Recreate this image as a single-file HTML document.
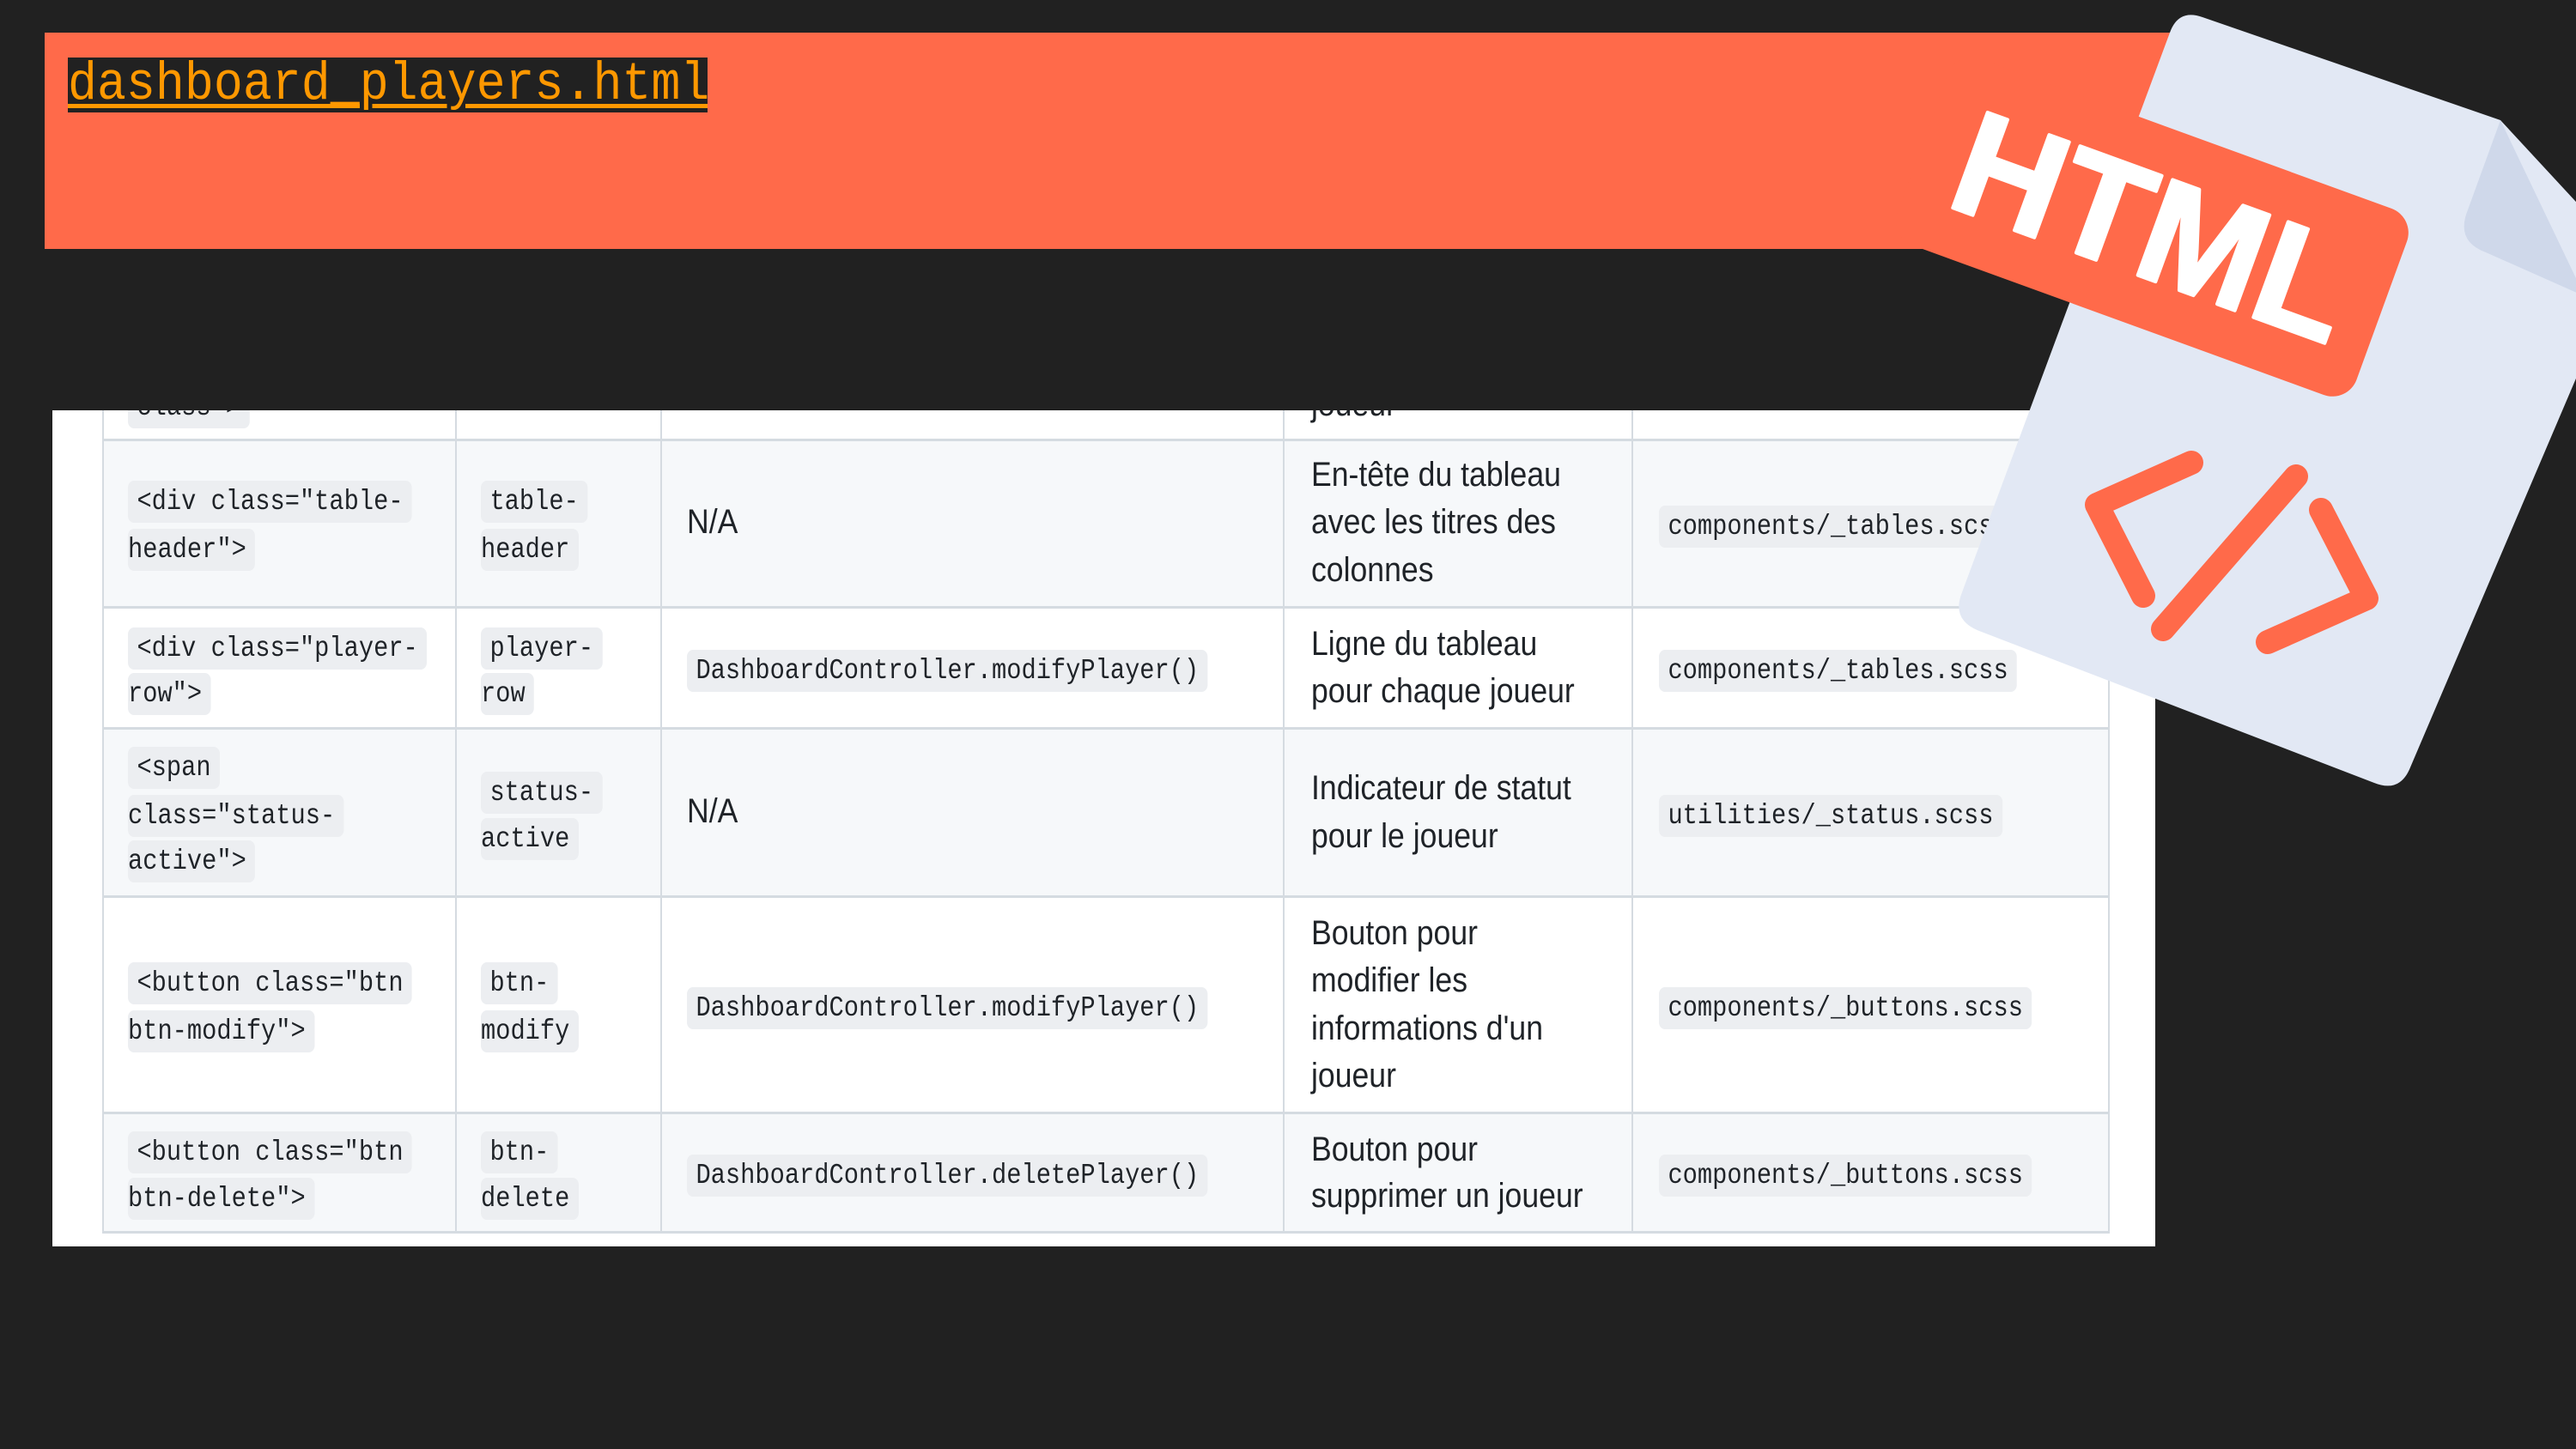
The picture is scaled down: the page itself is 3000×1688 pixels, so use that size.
<!DOCTYPE html>
<html><head><meta charset="utf-8"><style>
*{margin:0;padding:0;box-sizing:border-box}
body{width:3000px;height:1688px;background:#212121;position:relative;overflow:hidden;font-family:"Liberation Sans",sans-serif}
.banner{position:absolute;left:52px;top:38px;width:2520px;height:252px;background:#ff6a4a}
.title{position:absolute;left:79px;top:67px;height:64px;width:745px;background:#212121;overflow:hidden}
.title span{display:block;color:#ff9800;font-family:"Liberation Mono",monospace;font-size:62px;line-height:64px;text-decoration:underline;text-decoration-thickness:5px;text-underline-offset:6px;white-space:nowrap;transform:scaleX(0.913);transform-origin:left center}
.panel{position:absolute;left:61px;top:478px;width:2449px;height:974px;background:#fff;overflow:hidden}
.row{position:absolute;left:58px;width:2336px;border-top:3px solid #d5dbe1}
.vl{position:absolute;top:0;width:2px;height:959px;background:#d5dbe1}
.t{position:absolute;height:54px;line-height:54px;white-space:nowrap;transform-origin:left center;color:#1f2328}
.c{font-family:"Liberation Mono",monospace;font-size:33px;transform:scaleX(0.87)}
.c span{background:#eceef1;border-radius:8px;padding:6px 12px}
.s{font-size:40px;transform:scaleX(0.89)}
</style></head><body>
<div class="banner"></div>
<div class="title"><span>dashboard_players.html</span></div>

<div class="panel">
<div style="position:absolute;left:58px;top:0;width:2336px;height:33px;background:#fff"></div>
<div class="row" style="top:33px;height:195px;background:#f6f8fa"></div>
<div class="row" style="top:228px;height:141px;background:#fff"></div>
<div class="row" style="top:369px;height:196px;background:#f6f8fa"></div>
<div class="row" style="top:565px;height:252px;background:#fff"></div>
<div class="row" style="top:817px;height:142px;background:#f6f8fa;border-bottom:3px solid #d5dbe1"></div>
<div class="vl" style="left:58px"></div>
<div class="vl" style="left:469px"></div>
<div class="vl" style="left:708px"></div>
<div class="vl" style="left:1433px"></div>
<div class="vl" style="left:1839px"></div>
<div class="vl" style="left:2394px"></div>

<div class="t c" style="left:88px;top:-30px"><span>class"&gt;</span></div>
<div class="t s" style="left:1466px;top:-34px">joueur</div>

<div class="t c" style="left:88px;top:80px"><span>&lt;div class="table-</span></div>
<div class="t c" style="left:88px;top:136px"><span style="padding-left:0">header"&gt;</span></div>
<div class="t c" style="left:499px;top:80px"><span>table-</span></div>
<div class="t c" style="left:499px;top:136px"><span style="padding-left:0">header</span></div>
<div class="t s" style="left:739px;top:103px">N/A</div>
<div class="t s" style="left:1466px;top:48px">En-tête du tableau</div>
<div class="t s" style="left:1466px;top:103px">avec les titres des</div>
<div class="t s" style="left:1466px;top:159px">colonnes</div>
<div class="t c" style="left:1871px;top:109px"><span>components/_tables.scss</span></div>

<div class="t c" style="left:88px;top:251px"><span>&lt;div class="player-</span></div>
<div class="t c" style="left:88px;top:304px"><span style="padding-left:0">row"&gt;</span></div>
<div class="t c" style="left:499px;top:251px"><span>player-</span></div>
<div class="t c" style="left:499px;top:304px"><span style="padding-left:0">row</span></div>
<div class="t c" style="left:739px;top:277px"><span>DashboardController.modifyPlayer()</span></div>
<div class="t s" style="left:1466px;top:245px">Ligne du tableau</div>
<div class="t s" style="left:1466px;top:300px">pour chaque joueur</div>
<div class="t c" style="left:1871px;top:277px"><span>components/_tables.scss</span></div>

<div class="t c" style="left:88px;top:390px"><span>&lt;span</span></div>
<div class="t c" style="left:88px;top:446px"><span style="padding-left:0">class="status-</span></div>
<div class="t c" style="left:88px;top:499px"><span style="padding-left:0">active"&gt;</span></div>
<div class="t c" style="left:499px;top:419px"><span>status-</span></div>
<div class="t c" style="left:499px;top:473px"><span style="padding-left:0">active</span></div>
<div class="t s" style="left:739px;top:440px">N/A</div>
<div class="t s" style="left:1466px;top:413px">Indicateur de statut</div>
<div class="t s" style="left:1466px;top:469px">pour le joueur</div>
<div class="t c" style="left:1871px;top:446px"><span>utilities/_status.scss</span></div>

<div class="t c" style="left:88px;top:641px"><span>&lt;button class="btn</span></div>
<div class="t c" style="left:88px;top:697px"><span style="padding-left:0">btn-modify"&gt;</span></div>
<div class="t c" style="left:499px;top:641px"><span>btn-</span></div>
<div class="t c" style="left:499px;top:697px"><span style="padding-left:0">modify</span></div>
<div class="t c" style="left:739px;top:670px"><span>DashboardController.modifyPlayer()</span></div>
<div class="t s" style="left:1466px;top:582px">Bouton pour</div>
<div class="t s" style="left:1466px;top:637px">modifier les</div>
<div class="t s" style="left:1466px;top:693px">informations d'un</div>
<div class="t s" style="left:1466px;top:748px">joueur</div>
<div class="t c" style="left:1871px;top:670px"><span>components/_buttons.scss</span></div>

<div class="t c" style="left:88px;top:838px"><span>&lt;button class="btn</span></div>
<div class="t c" style="left:88px;top:892px"><span style="padding-left:0">btn-delete"&gt;</span></div>
<div class="t c" style="left:499px;top:838px"><span>btn-</span></div>
<div class="t c" style="left:499px;top:892px"><span style="padding-left:0">delete</span></div>
<div class="t c" style="left:739px;top:865px"><span>DashboardController.deletePlayer()</span></div>
<div class="t s" style="left:1466px;top:834px">Bouton pour</div>
<div class="t s" style="left:1466px;top:888px">supprimer un joueur</div>
<div class="t c" style="left:1871px;top:865px"><span>components/_buttons.scss</span></div>
</div>

<svg style="position:absolute;left:0;top:0" width="3000" height="1688" viewBox="0 0 3000 1688">
  <path d="M2565 20 Q2537 10 2527 38 L2285 690 Q2272 722 2305 735 L2765 912 Q2795 924 2807 894 L3060 300 L2912 140 Z" fill="#e2e8f4"/>
  <path d="M2912 140 L2872 250 Q2862 282 2895 294 L3010 345 Z" fill="#cfd8ea"/>
  <g transform="translate(2288 62) rotate(20)">
    <rect x="-10" y="0" width="569" height="231" rx="30" fill="#ff6a4a"/>
    <text x="276" y="174" text-anchor="middle" font-family="Liberation Sans, sans-serif" font-weight="bold" font-size="172" fill="#fff" stroke="#fff" stroke-width="4" stroke-linejoin="round">HTML</text>
  </g>
  <g fill="none" stroke="#ff6a4a" stroke-width="28" stroke-linecap="round" stroke-linejoin="round">
    <path d="M2552 539 L2442 588 L2496 694"/>
    <path d="M2674 555 L2519 733"/>
    <path d="M2703 594 L2756 697 L2641 748"/>
  </g>
</svg>
</body></html>
